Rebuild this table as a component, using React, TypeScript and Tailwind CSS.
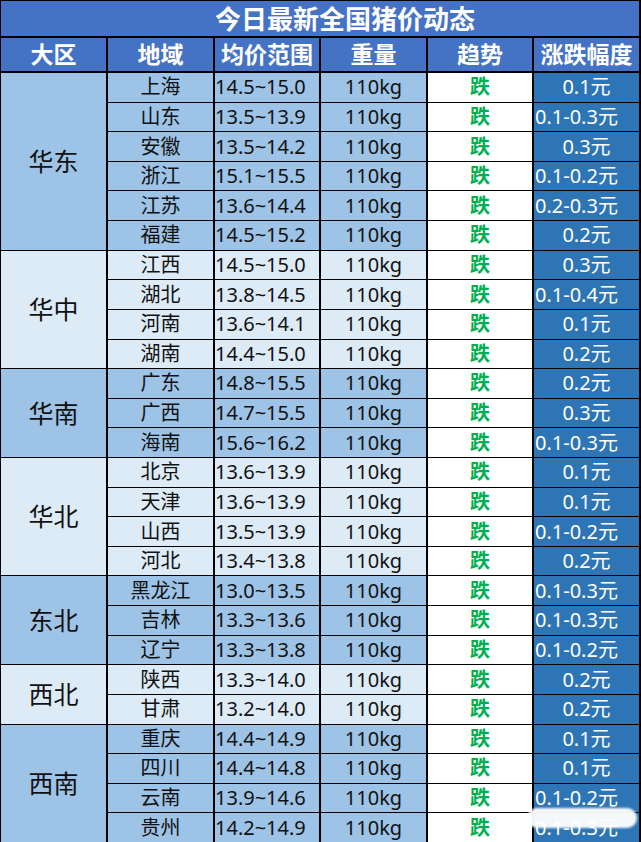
import React from "react";

type Row = [string, string, string];
type Group = { region: string; light: boolean; rows: Row[] };

const groups: Group[] = [
  {
    region: "华东",
    light: false,
    rows: [
      ["上海", "14.5~15.0", "0.1元"],
      ["山东", "13.5~13.9", "0.1-0.3元"],
      ["安徽", "13.5~14.2", "0.3元"],
      ["浙江", "15.1~15.5", "0.1-0.2元"],
      ["江苏", "13.6~14.4", "0.2-0.3元"],
      ["福建", "14.5~15.2", "0.2元"],
    ],
  },
  {
    region: "华中",
    light: true,
    rows: [
      ["江西", "14.5~15.0", "0.3元"],
      ["湖北", "13.8~14.5", "0.1-0.4元"],
      ["河南", "13.6~14.1", "0.1元"],
      ["湖南", "14.4~15.0", "0.2元"],
    ],
  },
  {
    region: "华南",
    light: false,
    rows: [
      ["广东", "14.8~15.5", "0.2元"],
      ["广西", "14.7~15.5", "0.3元"],
      ["海南", "15.6~16.2", "0.1-0.3元"],
    ],
  },
  {
    region: "华北",
    light: true,
    rows: [
      ["北京", "13.6~13.9", "0.1元"],
      ["天津", "13.6~13.9", "0.1元"],
      ["山西", "13.5~13.9", "0.1-0.2元"],
      ["河北", "13.4~13.8", "0.2元"],
    ],
  },
  {
    region: "东北",
    light: false,
    rows: [
      ["黑龙江", "13.0~13.5", "0.1-0.3元"],
      ["吉林", "13.3~13.6", "0.1-0.3元"],
      ["辽宁", "13.3~13.8", "0.1-0.2元"],
    ],
  },
  {
    region: "西北",
    light: true,
    rows: [
      ["陕西", "13.3~14.0", "0.2元"],
      ["甘肃", "13.2~14.0", "0.2元"],
    ],
  },
  {
    region: "西南",
    light: false,
    rows: [
      ["重庆", "14.4~14.9", "0.1元"],
      ["四川", "14.4~14.8", "0.1元"],
      ["云南", "13.9~14.6", "0.1-0.2元"],
      ["贵州", "14.2~14.9", "0.1-0.3元"],
    ],
  },
];

const spanClass: Record<number, string> = {
  2: "row-span-2",
  3: "row-span-3",
  4: "row-span-4",
  6: "row-span-6",
};

const headers = ["大区", "地域", "均价范围", "重量", "趋势", "涨跌幅度"];

export default function App() {
  return (
    <div className="relative w-[641px] h-[842px] overflow-hidden bg-black font-['Noto_Sans','Noto_Sans_CJK_SC',sans-serif] text-[#111]">
      <div className="ml-[1px] mr-[2px] mt-[1px] h-[35px] bg-[#4472C4] flex items-center justify-center pl-[50px] text-white font-bold text-[26px] leading-none">
        今日最新全国猪价动态
      </div>
      <div className="mt-[2px] pl-[1px] pr-[2px] grid grid-cols-[105px_105px_104px_105px_104px_105px] gap-x-[2px] h-[33px]">
        {headers.map((h) => (
          <div
            key={h}
            className="bg-[#4472C4] flex items-center justify-center text-white font-bold text-[23px] leading-none whitespace-nowrap"
          >
            {h}
          </div>
        ))}
      </div>
      <div className="mt-[2px] pl-[1px] pr-[2px] grid grid-cols-[105px_105px_104px_105px_104px_105px] grid-rows-[repeat(26,minmax(0,1fr))] gap-x-[2px] gap-y-px h-[769px]">
        {groups.map((g) => {
          const bg = g.light ? "bg-[#DDEBF7]" : "bg-[#9DC3E6]";
          return (
            <React.Fragment key={g.region}>
              <div
                className={`${spanClass[g.rows.length]} ${bg} flex items-center justify-center text-[25px] leading-none`}
              >
                {g.region}
              </div>
              {g.rows.map(([name, range, change]) => {
                const long = change.length > 5;
                return (
                  <React.Fragment key={name}>
                    <div className={`${bg} flex items-center justify-center text-[20px] leading-none whitespace-nowrap`}>
                      {name}
                    </div>
                    <div className={`${bg} flex items-center justify-start text-[20px] leading-none whitespace-nowrap overflow-visible`}>
                      {range}
                    </div>
                    <div className={`${bg} flex items-center justify-center text-[20px] leading-none whitespace-nowrap`}>
                      110kg
                    </div>
                    <div className="bg-white flex items-center justify-center text-[20px] font-bold leading-none text-[#00B050]">
                      跌
                    </div>
                    <div
                      className={`bg-[#2E75B6] flex items-center ${long ? "justify-start pl-[1px]" : "justify-center"} text-[20px] leading-none whitespace-nowrap text-white`}
                    >
                      {change}
                    </div>
                  </React.Fragment>
                );
              })}
            </React.Fragment>
          );
        })}
      </div>
      <div className="absolute left-[527px] top-[808px] w-[110px] h-[20px] rounded-full bg-white/95 blur-[1px]" />
    </div>
  );
}
